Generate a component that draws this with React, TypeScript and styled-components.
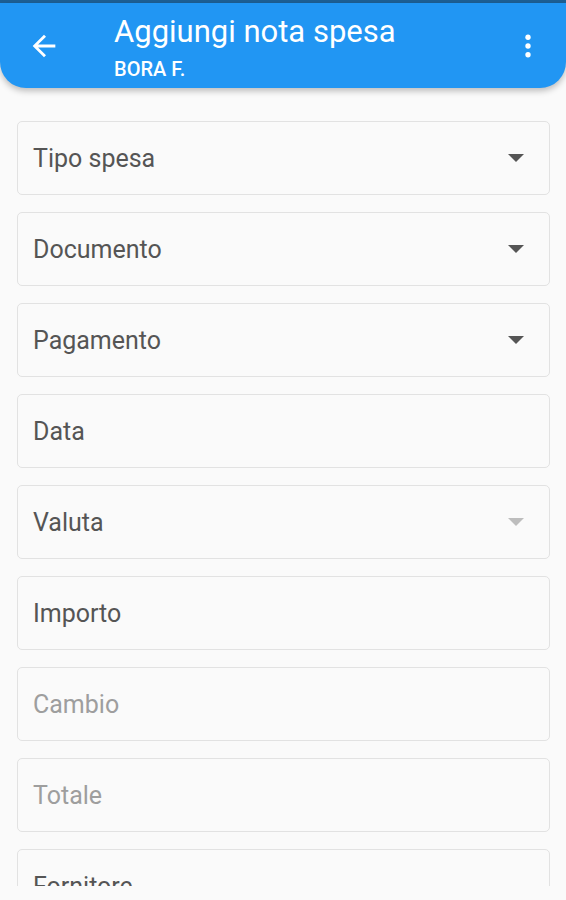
import React from 'react';
import styled, { createGlobalStyle } from 'styled-components';

const GlobalStyle = createGlobalStyle`
	*, *::before, *::after {
		box-sizing: border-box;
	}
	html, body {
		margin: 0;
		padding: 0;
		background: #fafafa;
		font-family: Roboto, "Noto Sans", sans-serif;
	}
`;

const Page = styled.div`
	width: 566px;
	height: 900px;
	display: flex;
	flex-direction: column;
	background: #fafafa;
	overflow: hidden;
`;

const StatusStrip = styled.div`
	height: 3px;
	background: #1d5f94;
	flex-shrink: 0;
`;

const AppBar = styled.header`
	height: 85px;
	flex-shrink: 0;
	background: #2196f3;
	border-radius: 0 0 26px 26px;
	box-shadow: 0 3px 6px rgba(0, 0, 0, 0.25);
	display: flex;
	align-items: center;
	color: #fff;
	position: relative;
	z-index: 1;
`;

const IconButton = styled.div<{ $width: number }>`
	width: ${p => p.$width}px;
	height: 85px;
	display: flex;
	align-items: center;
	justify-content: center;
	flex-shrink: 0;
`;

const Titles = styled.div`
	flex: 1;
	display: flex;
	flex-direction: column;
	padding: 4px 0 0 26px;
`;

const Title = styled.div`
	font-size: 31px;
	line-height: 36px;
	font-weight: 400;
`;

const Subtitle = styled.div`
	font-size: 20px;
	line-height: 24px;
	font-weight: 500;
	margin-top: 7px;
`;

const Content = styled.main`
	height: 798px;
	flex-shrink: 0;
	overflow: hidden;
	padding: 33px 16px 0 17px;
	display: flex;
	flex-direction: column;
	gap: 17px;
`;

const Field = styled.div`
	height: 74px;
	flex-shrink: 0;
	border: 1px solid #e2e2e2;
	border-radius: 5px;
	background: #fafafa;
	display: flex;
	align-items: center;
	padding: 0 25px 0 15px;
`;

const Label = styled.span<{ $disabled?: boolean }>`
	flex: 1;
	font-size: 25px;
	color: ${p => (p.$disabled ? '#9e9e9e' : '#555555')};
	padding-top: 1px;
`;

const Caret = styled.svg<{ $disabled?: boolean }>`
	width: 16px;
	height: 8px;
	fill: ${p => (p.$disabled ? '#bdbdbd' : '#555555')};
`;

const FIELDS = [
	{ label: 'Tipo spesa', select: true },
	{ label: 'Documento', select: true },
	{ label: 'Pagamento', select: true },
	{ label: 'Data' },
	{ label: 'Valuta', select: true, caretDisabled: true },
	{ label: 'Importo' },
	{ label: 'Cambio', disabled: true },
	{ label: 'Totale', disabled: true },
	{ label: 'Fornitore' },
];

function App() {
	return (
		<Page>
			<GlobalStyle />
			<StatusStrip />
			<AppBar>
				<IconButton $width={88}>
					<svg width="34" height="34" viewBox="0 0 24 24" fill="#fff">
						<path d="M20 11H7.83l5.59-5.59L12 4l-8 8 8 8 1.41-1.41L7.83 13H20v-2z" />
					</svg>
				</IconButton>
				<Titles>
					<Title>Aggiungi nota spesa</Title>
					<Subtitle>BORA F.</Subtitle>
				</Titles>
				<IconButton $width={76}>
					<svg width="28" height="28" viewBox="0 0 24 24" fill="#fff">
						<circle cx="12" cy="4.5" r="2.3" />
						<circle cx="12" cy="12" r="2.3" />
						<circle cx="12" cy="19.5" r="2.3" />
					</svg>
				</IconButton>
			</AppBar>
			<Content>
				{FIELDS.map(f => (
					<Field key={f.label}>
						<Label $disabled={f.disabled}>{f.label}</Label>
						{f.select && (
							<Caret viewBox="0 0 16 8" $disabled={f.caretDisabled}>
								<path d="M0 0h16L8 8z" />
							</Caret>
						)}
					</Field>
				))}
			</Content>
		</Page>
	);
}

export default App;
